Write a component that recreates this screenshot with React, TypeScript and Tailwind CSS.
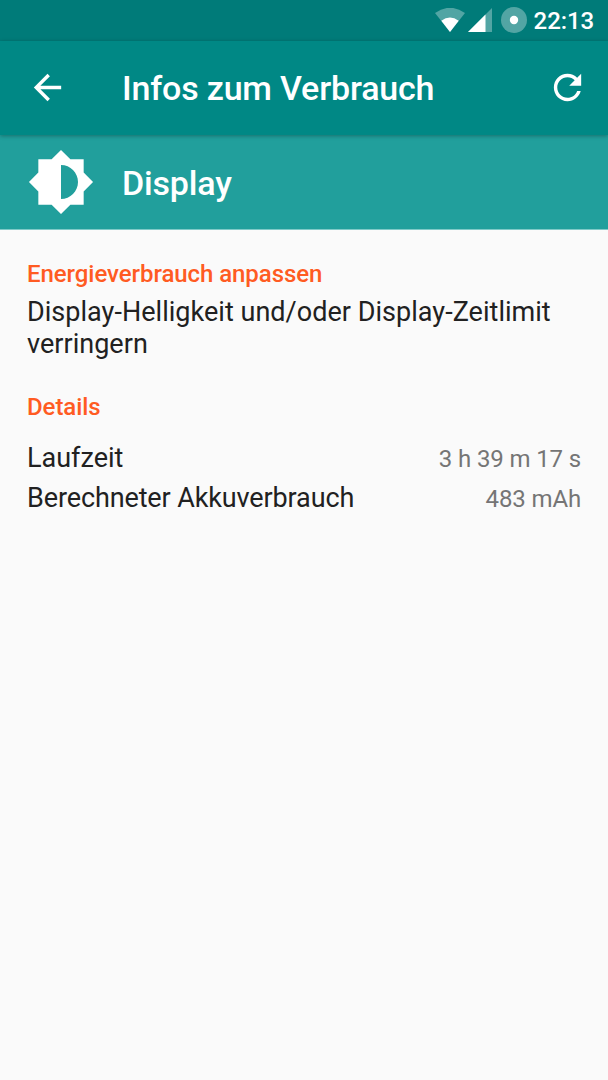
export default function App() {
  return (
    <div className="flex h-[1080px] w-[608px] flex-col overflow-hidden bg-[#fafafa] font-['Roboto',sans-serif] text-[#212121]">
      <div className="flex h-[41px] shrink-0 items-center justify-end bg-[#007b79] pb-px pr-[14px] text-white">
        <svg className="mr-[3px] h-[24px] w-[30px]" viewBox="0 0 30 24">
          <path d="M0 5Q15 -5.500 30 5L15 24Z" fill="#fff" fillOpacity=".32" />
          <path d="M6.300 12.800Q15 6 23.700 12.800L15 24Z" fill="#fff" />
        </svg>
        <svg className="mr-[9px] h-[24px] w-[24px]" viewBox="0 0 24 24">
          <path d="M24 0V24H0Z" fill="#fff" fillOpacity=".32" />
          <path d="M17.500 6.500V24H0Z" fill="#fff" />
        </svg>
        <svg className="mr-[7px] h-[26px] w-[26px]" viewBox="0 0 26 26">
          <circle cx="13" cy="13" r="13" fill="#fff" fillOpacity=".32" />
          <circle cx="13" cy="13" r="4.200" fill="#fff" />
        </svg>
        <span className="pt-[2px] text-[24px] font-medium leading-[40px] tracking-[-0.1px]">22:13</span>
      </div>
      <header className="relative z-10 flex h-[94px] shrink-0 items-center bg-[#008885] pb-px text-white shadow-[0_1px_4px_rgba(0,0,0,0.3)]">
        <svg className="ml-[27px] size-[41px]" viewBox="0 0 24 24" fill="currentColor">
          <path d="M20 11H7.830l5.590-5.590L12 4l-8 8 8 8 1.410-1.410L7.830 13H20v-2z" />
        </svg>
        <h1 className="ml-[54px] pt-px text-[34px] font-medium leading-none tracking-[-0.18px]">Infos zum Verbrauch</h1>
        <svg className="ml-auto mr-[20px] size-[41px]" viewBox="0 0 24 24" fill="currentColor">
          <path d="M17.650 6.350C16.200 4.900 14.210 4 12 4c-4.420 0-7.990 3.580-7.990 8s3.570 8 7.990 8c3.730 0 6.840-2.550 7.730-6h-2.080c-.82 2.330-3.040 4-5.650 4-3.310 0-6-2.690-6-6s2.690-6 6-6c1.660 0 3.140.69 4.220 1.780L13 11h7V4l-2.350 2.350z" />
        </svg>
      </header>
      <section className="flex h-[95px] shrink-0 items-center border-b border-[#7fcac8] bg-[#219f9c] text-white">
        <svg className="ml-[27px] size-[68px]" viewBox="0 0 24 24" fill="currentColor">
          <path d="M20 15.310L23.310 12 20 8.690V4h-4.690L12 .69 8.690 4H4v4.690L.69 12 4 15.310V20h4.690L12 23.310 15.310 20H20v-4.690zM12 18V6c3.310 0 6 2.690 6 6s-2.690 6-6 6z" />
        </svg>
        <h2 className="ml-[27px] pt-[2px] text-[34px] font-medium leading-none tracking-[-0.18px]">Display</h2>
      </section>
      <main className="flex flex-col px-[27px] pt-[28px]">
        <h3 className="text-[24px] font-medium leading-[32px] tracking-[-0.06px] text-[#ff5b22]">Energieverbrauch anpassen</h3>
        <p className="mt-[6px] text-[27px] leading-[32px] tracking-[0.03px]">Display-Helligkeit und/oder Display-Zeitlimit verringern</p>
        <h3 className="mt-[31px] text-[24px] font-medium leading-[32px] tracking-[-0.06px] text-[#ff5b22]">Details</h3>
        <dl className="mt-[15px] flex flex-col">
          <div className="flex h-[40px] items-center justify-between">
            <dt className="text-[27px]">Laufzeit</dt>
            <dd className="pt-[2px] text-[24px] tracking-[-0.13px] text-[#757575]">3 h 39 m 17 s</dd>
          </div>
          <div className="flex h-[40px] items-center justify-between">
            <dt className="text-[27px] tracking-[-0.12px]">Berechneter Akkuverbrauch</dt>
            <dd className="pt-[2px] text-[24px] tracking-[-0.13px] text-[#757575]">483 mAh</dd>
          </div>
        </dl>
      </main>
    </div>
  );
}
